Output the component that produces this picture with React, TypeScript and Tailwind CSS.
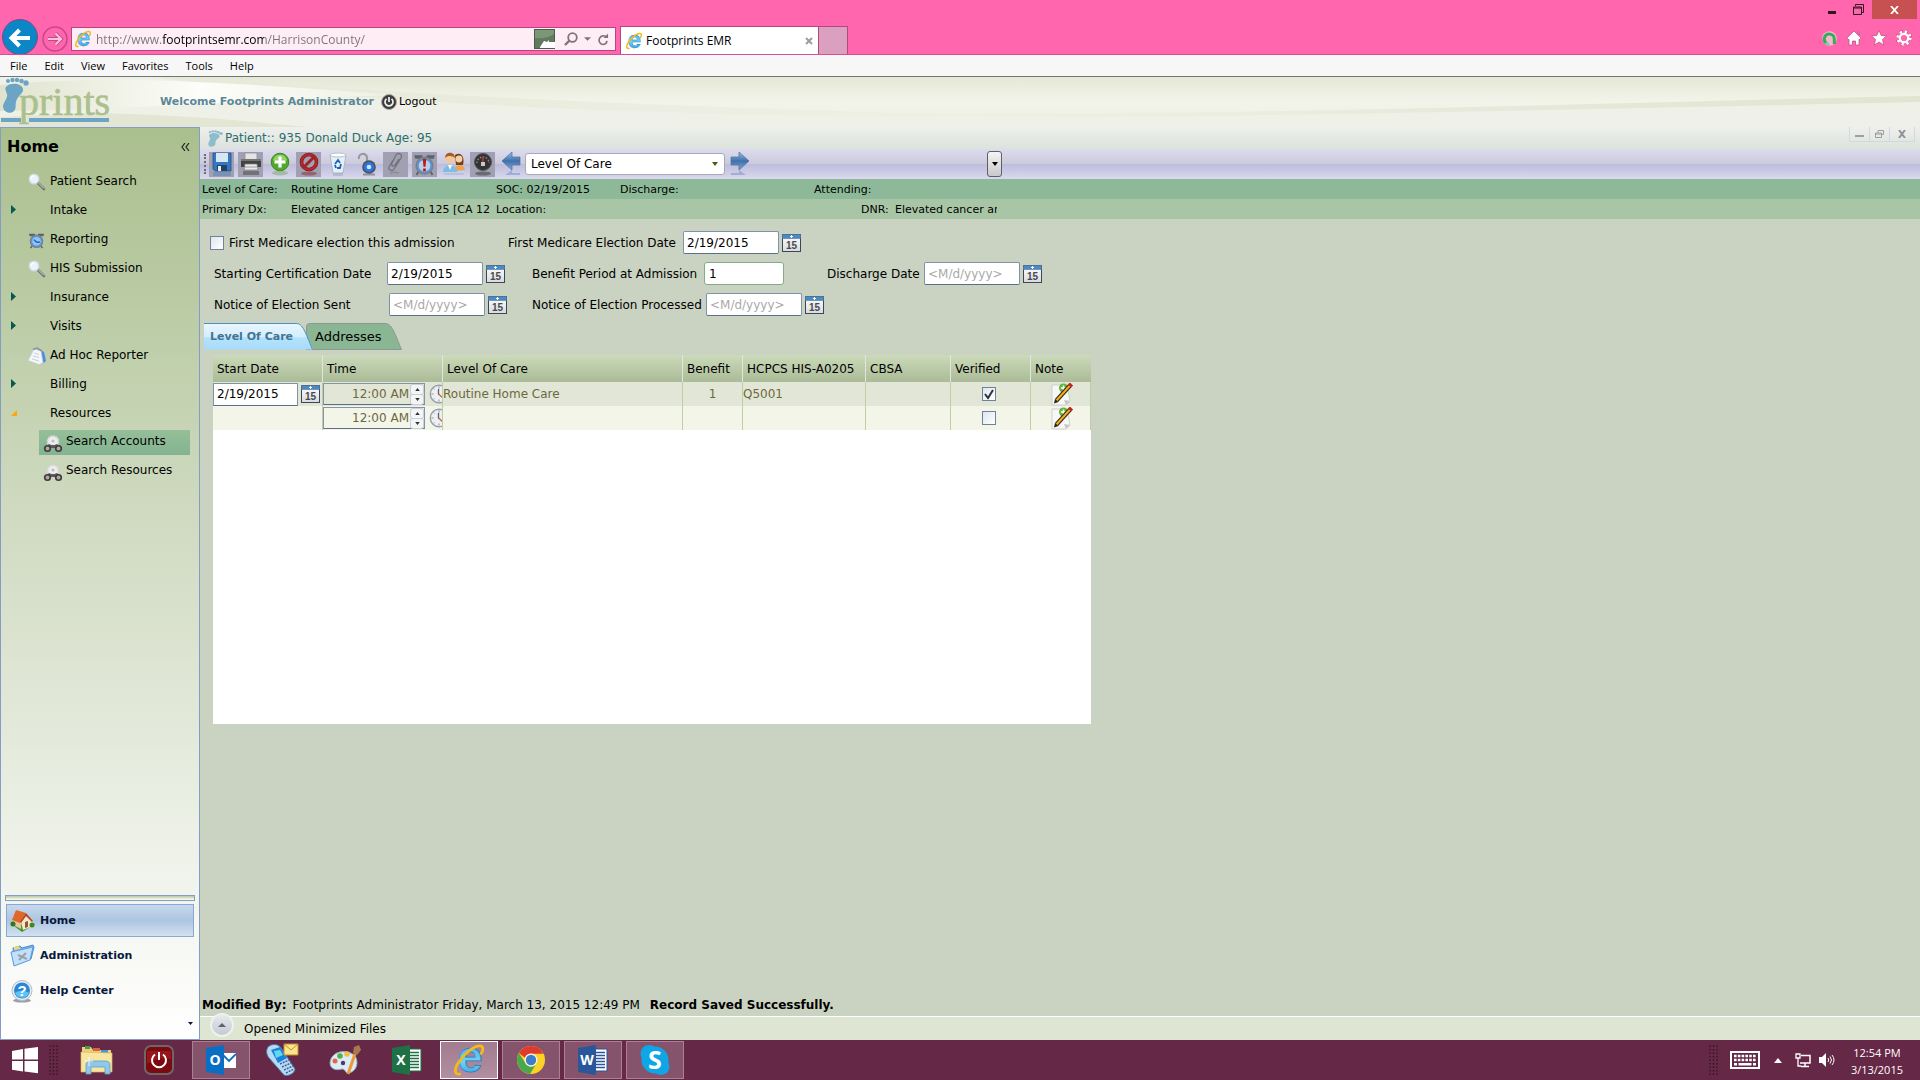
import type { ReactNode } from "react";

/* ───────────── Browser icons ───────────── */

function IeLogo({ size }: { size: number }) {
  return (
    <svg width={size} height={size} viewBox="0 0 32 32" className="overflow-visible" aria-hidden="true">
      <defs>
        <linearGradient id="ieBlue" x1="0" y1="0" x2="0" y2="1">
          <stop offset="0" stopColor="#2f95d8" />
          <stop offset="0.6" stopColor="#6fd2f8" />
          <stop offset="1" stopColor="#1e86cf" />
        </linearGradient>
      </defs>
      <text
        x="17"
        y="29"
        textAnchor="middle"
        fontSize="48"
        fontWeight="700"
        fontFamily="Liberation Sans, sans-serif"
        fill="url(#ieBlue)"
        stroke="#1b7fc4"
        strokeWidth="0.8"
      >
        e
      </text>
      <path
        d="M6 31C0 32 0 25 6 17C12 8 23 0 28 1C32 2 31 6 29 9"
        fill="none"
        stroke="#f5b91c"
        strokeWidth="3"
        strokeLinecap="round"
      />
    </svg>
  );
}

function WindowsLogo() {
  return (
    <svg width="28" height="28" viewBox="0 0 28 28" fill="#fff" aria-hidden="true">
      <path d="M1 5l11-2v10.500H1zM13.500 2.800L27 1v12.500H13.500zM1 15h11v10.500L1 23.800zM13.500 15H27v12.300l-13.500-1.800z" />
    </svg>
  );
}

/* ───────────── Application icons ───────────── */

function Footprint({ color }: { color: string }) {
  return (
    <svg width="17" height="17" viewBox="0 0 30 36" preserveAspectRatio="none" fill={color} aria-hidden="true">
      <path d="M7 9C13 4 23 7 24 13C24 17 18 19 17 24C16 29 18 31 14 34C9 38 3 34 4 29C5 24 8 21 7 17C6 14 4 11 7 9z" />
      <circle cx="7" cy="4.500" r="2.200" />
      <circle cx="12" cy="3" r="2.400" />
      <circle cx="17" cy="3" r="2.400" />
      <circle cx="21.500" cy="4.500" r="2.500" />
      <circle cx="26.500" cy="7.500" r="3.200" />
    </svg>
  );
}

function MagnifierIcon() {
  return (
    <svg width="18" height="18" viewBox="0 0 18 18" aria-hidden="true">
      <path d="M10 10l6 6" stroke="#6f7174" strokeWidth="2.600" strokeLinecap="round" />
      <path d="M10 9.500l6 6" stroke="#d9dadc" strokeWidth="1" />
      <circle cx="6" cy="6" r="4.800" fill="#e8f4fd" stroke="#d2dadf" strokeWidth="1.400" />
      <path d="M3 6a3 3 0 013-3" stroke="#fff" strokeWidth="1.500" fill="none" />
    </svg>
  );
}

function AlarmIcon({ size = 18, alert = false }: { size?: number; alert?: boolean }) {
  return (
    <svg width={size} height={size} viewBox="0 0 20 20" aria-hidden="true">
      <path d="M1 2h7l1 3H2zM19 2h-7l-1 3h7z" fill="#5d6266" />
      <path d="M5 16l-2 3M15 16l2 3" stroke="#666" strokeWidth="1.800" />
      <circle cx="10" cy="11" r="7.200" fill="#5b97e0" stroke="#77828c" strokeWidth="1.500" />
      <circle cx="10" cy="11" r="5" fill={alert ? "#bcd0e4" : "#8fc5fb"} />
      {alert ? (
        <path d="M8.500 5h3l-.6 7H9.100zM8.800 13.500h2.400v2.400H8.800z" fill="#c01818" />
      ) : (
        <path d="M7 9l3 3h4" stroke="#1d4f9c" strokeWidth="1.400" fill="none" />
      )}
    </svg>
  );
}

function ReportIcon() {
  return (
    <svg width="18" height="18" viewBox="0 0 18 18" aria-hidden="true">
      <path d="M11 2l5 3 2 9-4 3z" fill="#4e8cdd" />
      <path d="M6 2l7 2 2 12-4 1.500-11-4z" fill="#f4f7fa" stroke="#c5ced8" strokeWidth="0.800" />
      <path d="M5 2.500l4-1.500 5 3" stroke="#8694a5" strokeWidth="1.500" fill="none" />
      <path d="M6 6l5 1.500M5 9l6 1.500M4 12l7 2" stroke="#c3ccd5" strokeWidth="0.900" />
    </svg>
  );
}

function BinocularsIcon() {
  return (
    <svg width="20" height="18" viewBox="0 0 20 18" aria-hidden="true">
      <circle cx="10" cy="6.500" r="5.500" fill="#ededed" stroke="#d6d6d6" strokeWidth="1.800" strokeDasharray="2 0.800" />
      <circle cx="10" cy="6" r="1.500" fill="#bdbdbd" />
      <path d="M6 9l2.500 1h3L14 9l4 4H2z" fill="#5a5a5a" />
      <circle cx="4.500" cy="13.500" r="3.600" fill="#3d3d3d" />
      <circle cx="15.500" cy="13.500" r="3.600" fill="#3d3d3d" />
      <circle cx="4.500" cy="13.500" r="1.900" fill="#b5a5a5" />
      <circle cx="15.500" cy="13.500" r="1.900" fill="#b5a5a5" />
    </svg>
  );
}

function CalendarIcon() {
  return (
    <svg width="19" height="18" viewBox="0 0 19 18" aria-hidden="true">
      <defs>
        <linearGradient id="calPaper" x1="0" y1="0" x2="0" y2="1">
          <stop offset="0" stopColor="#ffffff" />
          <stop offset="1" stopColor="#d6dbe2" />
        </linearGradient>
      </defs>
      <rect x="0.500" y="0.500" width="18" height="17" fill="url(#calPaper)" stroke="#3f4650" />
      <rect x="0.500" y="0.500" width="18" height="4" fill="#4a8ac6" stroke="#5a7898" strokeWidth="0.600" />
      <path d="M9.500 1v3M8 2.500h3" stroke="#fff" />
      <text x="9.500" y="15" textAnchor="middle" fontSize="10" fontWeight="700" fontFamily="Liberation Sans, sans-serif" fill="#4a4a4a">
        15
      </text>
    </svg>
  );
}

function ClockIcon() {
  return (
    <svg width="13" height="20" viewBox="0 0 13 20" aria-hidden="true">
      <circle cx="10" cy="10" r="8.700" fill="#edf0f3" stroke="#98a0a8" strokeWidth="1.400" />
      <path d="M10 2.500v2M2.500 10h2M10 15.500v2M4.500 4.500l1 1M4.500 15.500l1-1" stroke="#89919a" />
      <path d="M9.500 5v5.500" stroke="#56616c" strokeWidth="1.300" />
      <path d="M9.500 10l4 3.500" stroke="#c0603c" strokeWidth="1.300" />
    </svg>
  );
}

function NoteIcon() {
  return (
    <svg width="22" height="23" viewBox="0 0 22 23" aria-hidden="true">
      <path d="M1 2h15l3 16-4 4H1z" fill="#f7f7f7" stroke="#c8c8c8" strokeWidth="0.800" />
      <path d="M19 18l-6-1 2 5z" fill="#c6c6c6" />
      <circle cx="12.500" cy="5" r="4.500" fill="#62b53f" />
      <path d="M12.500 2.500v5M10 5h5" stroke="#fff" strokeWidth="1.500" />
      <path d="M5.500 17.500L19 2.500" stroke="#33290f" strokeWidth="4.200" />
      <path d="M5.500 17.500L19 2.500" stroke="#f2ae22" strokeWidth="2" />
      <path d="M18.500 3l2-2" stroke="#cb2020" strokeWidth="4.500" />
      <path d="M3 20.500l1-4.500 3.500 3z" fill="#2e2613" />
    </svg>
  );
}

function ArrowIcon({ flip = false }: { flip?: boolean }) {
  return (
    <svg width="20" height="26" viewBox="0 0 20 26" aria-hidden="true" className={flip ? "-scale-x-100" : ""}>
      <defs>
        <linearGradient id="arrowBlue" x1="0" y1="0" x2="0" y2="1">
          <stop offset="0" stopColor="#9cc3e8" />
          <stop offset="0.500" stopColor="#3f70aa" />
          <stop offset="1" stopColor="#83abd6" />
        </linearGradient>
      </defs>
      <path d="M1 10L11 1v5h8v8h-8v5z" fill="url(#arrowBlue)" stroke="#476d9d" strokeWidth="0.700" />
      <path d="M11 19l-7 5h15v-2h-8z" fill="#7f9ac9" opacity="0.600" />
    </svg>
  );
}

/* ───────────── Toolbar drawings ───────────── */

const toolbarButtons: { label: string; shaded: boolean; icon: ReactNode }[] = [
  {
    label: "Save",
    shaded: true,
    icon: (
      <svg width="20" height="24" viewBox="0 0 20 24">
        <path d="M1 1h18v18H3l-2-2z" fill="#3477c2" stroke="#235287" strokeWidth="0.800" />
        <path d="M4 1h12v9H4z" fill="#d7e6f4" />
        <path d="M5 13h10v6H5z" fill="#25435f" />
        <path d="M6 14h3v5H6z" fill="#e7edf2" />
        <path d="M1 20h18v4H1z" fill="#3477c2" opacity="0.350" />
      </svg>
    ),
  },
  {
    label: "Print",
    shaded: true,
    icon: (
      <svg width="22" height="24" viewBox="0 0 22 24">
        <path d="M5 1h12v7H5z" fill="#e4e4e4" stroke="#888" strokeWidth="0.700" />
        <path d="M1 7h20v8H1z" fill="#444" />
        <path d="M1 7h20v2H1z" fill="#747474" />
        <path d="M5 12h12l1 6H4z" fill="#ececec" stroke="#777" strokeWidth="0.700" />
        <path d="M5 15h12" stroke="#999" />
        <path d="M3 19h16v4H3z" fill="#444" opacity="0.500" />
      </svg>
    ),
  },
  {
    label: "Add",
    shaded: false,
    icon: (
      <svg width="20" height="24" viewBox="0 0 20 24">
        <ellipse cx="10" cy="21" rx="8" ry="2.500" fill="#7fa372" opacity="0.500" />
        <circle cx="10" cy="10" r="8.800" fill="#51a82c" stroke="#3f8a20" />
        <path d="M3 8a7.300 7.300 0 0114 0c-4 2-10 2-14 0z" fill="#93d16c" />
        <path d="M10 4.500v11M4.500 10h11" stroke="#fff" strokeWidth="3.200" />
      </svg>
    ),
  },
  {
    label: "Cancel",
    shaded: true,
    icon: (
      <svg width="20" height="24" viewBox="0 0 20 24">
        <ellipse cx="10" cy="21.500" rx="8" ry="2" fill="#8a2430" opacity="0.500" />
        <circle cx="10" cy="10" r="7.500" fill="none" stroke="#7c161a" strokeWidth="3.600" />
        <circle cx="10" cy="10" r="7.500" fill="none" stroke="#b3282c" strokeWidth="2.400" />
        <path d="M4.500 15.500l11-11" stroke="#a02126" strokeWidth="3" />
      </svg>
    ),
  },
  {
    label: "Recycle",
    shaded: false,
    icon: (
      <svg width="18" height="24" viewBox="0 0 18 24">
        <path d="M1 3h16l-3 18H4z" fill="#e6eef6" stroke="#aab9c9" />
        <ellipse cx="9" cy="3" rx="8" ry="2" fill="#fff" stroke="#b4c0cc" />
        <path d="M6 12l3-4 2 3M12 12l-1 4H8M6 13l1 3" stroke="#1d62b8" strokeWidth="1.800" fill="none" />
        <path d="M4 21h10v3H4z" fill="#9aa7b8" opacity="0.500" />
      </svg>
    ),
  },
  {
    label: "Unlock",
    shaded: false,
    icon: (
      <svg width="20" height="24" viewBox="0 0 20 24">
        <path d="M2 7a4 4 0 018-2v5" fill="none" stroke="#9a9a9a" strokeWidth="2.200" />
        <circle cx="12" cy="15" r="6.800" fill="#4a4f57" />
        <circle cx="12" cy="15" r="5.300" fill="#2d75d8" />
        <circle cx="12" cy="15" r="2.300" fill="#cfe5fb" />
        <path d="M6 22.500h12" stroke="#555" strokeWidth="2" opacity="0.500" />
      </svg>
    ),
  },
  {
    label: "Attach",
    shaded: true,
    icon: (
      <svg width="20" height="24" viewBox="0 0 20 24">
        <path
          d="M7 8L3 15c-1 3 3 5 5 2l7-11c2-4-3-6-5-3L6 11c-1 3 1 4 3 2l4-6"
          fill="none"
          stroke="#73737c"
          strokeWidth="1.300"
        />
        <path d="M4 21c3-1 6-1 9 0" stroke="#777" strokeWidth="1.600" opacity="0.500" fill="none" />
      </svg>
    ),
  },
  { label: "Alarm", shaded: true, icon: <AlarmIcon size={23} alert /> },
  {
    label: "Contacts",
    shaded: false,
    icon: (
      <svg width="24" height="24" viewBox="0 0 24 24">
        <path d="M12 19c0-7 10-8 11-1z" fill="#eda24c" />
        <path d="M13 3c6-4 10 2 8 10h-7z" fill="#7a3d17" />
        <circle cx="17" cy="7" r="3.400" fill="#f7cfa4" />
        <path d="M1 20c0-9 14-9 14 0z" fill="#7ebce4" />
        <path d="M6 13h4l-2 5z" fill="#fff" />
        <circle cx="8" cy="6.500" r="4.500" fill="#f4c797" />
        <path d="M3 6c0-7 10-7 10 0-2-2-7-3-10 0z" fill="#a35f22" />
        <path d="M2 21h20v2H2z" fill="#92b9da" opacity="0.500" />
      </svg>
    ),
  },
  {
    label: "Dashboard",
    shaded: true,
    icon: (
      <svg width="20" height="24" viewBox="0 0 20 24">
        <circle cx="10" cy="10" r="8.500" fill="#333" stroke="#555" />
        <path d="M4 11a6 6 0 0112 0" stroke="#8b8b8b" strokeWidth="1.500" strokeDasharray="1.500 1.500" fill="none" />
        <path d="M10 10V5" stroke="#c33" strokeWidth="1.500" />
        <path d="M8 10h4v4H8z" fill="#c8c8c8" />
        <ellipse cx="10" cy="21.500" rx="8" ry="2" fill="#333" opacity="0.500" />
      </svg>
    ),
  },
];

/* ───────────── Form parts ───────────── */

function DateField({ id, value = "", label, labelWidth }: { id: string; value?: string; label: string; labelWidth: string }) {
  return (
    <div className="flex items-center">
      <label htmlFor={id} className={`shrink-0 whitespace-nowrap ${labelWidth}`}>
        {label}
      </label>
      <input
        id={id}
        defaultValue={value}
        placeholder="<M/d/yyyy>"
        className="h-[23px] w-24 rounded-xs border border-[#7f93aa] border-b-[#5d6f86] bg-white px-[3px] placeholder:text-[#a9a9a9]"
      />
      <button type="button" aria-label={`Open calendar for ${label}`} className="ml-[3px]">
        <CalendarIcon />
      </button>
    </div>
  );
}

function CheckBox({ id, label, checked = false }: { id: string; label?: string; checked?: boolean }) {
  return (
    <span className="relative inline-block h-[14px] w-[14px]">
      <input
        id={id}
        type="checkbox"
        defaultChecked={checked}
        aria-label={label}
        className="peer block h-[14px] w-[14px] appearance-none border border-[#6f8299] bg-linear-to-br from-[#dfe6ee] to-white"
      />
      <svg
        viewBox="0 0 14 14"
        className="pointer-events-none absolute inset-0 hidden peer-checked:block"
        aria-hidden="true"
      >
        <path d="M3 7l3 4 5-8" fill="none" stroke="#2c3338" strokeWidth="2" />
      </svg>
    </span>
  );
}

function TimeField({ label }: { label: string }) {
  return (
    <div className="flex h-6 items-center overflow-hidden">
      <div className="flex h-[22px] w-[102px] shrink-0 items-center border border-[#8494a6] border-b-[#5d6f86] pr-px">
        <input aria-label={label} defaultValue="12:00 AM" className="w-0 min-w-0 flex-1 text-right" />
        <span className="ml-[2px] flex w-3 flex-col gap-px">
          <button
            type="button"
            aria-label="Later"
            className="flex h-[9px] items-center justify-center rounded-xs bg-[#f4f5f7] ring-1 ring-[#cbd0d6]"
          >
            <svg width="5" height="3" viewBox="0 0 6 4"><path d="M0 4l3-4 3 4z" fill="#333" /></svg>
          </button>
          <button
            type="button"
            aria-label="Earlier"
            className="flex h-[9px] items-center justify-center rounded-xs bg-[#f4f5f7] ring-1 ring-[#cbd0d6]"
          >
            <svg width="5" height="3" viewBox="0 0 6 4"><path d="M0 0l3 4 3-4z" fill="#333" /></svg>
          </button>
        </span>
      </div>
      <button type="button" aria-label="Pick time" className="ml-1 shrink-0">
        <ClockIcon />
      </button>
    </div>
  );
}

/* ───────────── Browser chrome ───────────── */

function BrowserChrome() {
  return (
    <header className="shrink-0 font-['Open_Sans','Noto_Sans',sans-serif]">
      <div className="flex h-[55px] items-end border-b border-[#d64f8f] bg-[#ff66ad]">
        <div className="flex h-full items-end">
          <button type="button" aria-label="Back" className="ml-[2px] h-[35px] w-9 overflow-hidden">
            <svg width="36" height="36" viewBox="0 0 36 36">
              <circle cx="18" cy="18" r="17.500" fill="#0b86c6" stroke="#7d4a86" />
              <path d="M28 19H10M17.500 11L9.500 19l8 8" fill="none" stroke="#fff" strokeWidth="4" />
            </svg>
          </button>
          <button type="button" aria-label="Forward" className="mb-[2px] ml-1 h-[26px] w-[26px]">
            <svg width="26" height="26" viewBox="0 0 26 26">
              <circle cx="13" cy="13" r="12" fill="none" stroke="#c4478a" strokeWidth="1.500" />
              <path d="M6 13h13M13.500 7.500L19 13l-5.500 5.500" fill="none" stroke="#c4478a" strokeWidth="4" />
              <path d="M6 13h12M13.500 7.500L19 13l-5.500 5.500" fill="none" stroke="#ffc1de" strokeWidth="2.200" />
            </svg>
          </button>
        </div>
        <div className="mb-[3px] ml-[3px] flex h-6 w-[545px] items-center border border-[#b34880] bg-[#ffedf6] pr-1.5 pl-[3px]">
          <IeLogo size={16} />
          {/* host name is darker than the rest of the address */}
          <input
            aria-label="Address"
            defaultValue="http://www.footprintsemr.com/HarrisonCounty/"
            className="mt-px ml-[5px] h-[22px] min-w-0 flex-1 bg-[linear-gradient(90deg,#7b7379_66px,#000_66px,#000_168px,#7b7379_168px)] bg-clip-text text-[12px] text-transparent caret-black"
          />
          <svg width="21" height="20" viewBox="0 0 21 20" className="mr-[9px]" aria-hidden="true">
            <rect x="0.500" y="0.500" width="20" height="19" fill="#5f7a5d" stroke="#4b5d4b" />
            <path d="M1 1h19v4C14 9 8 10 1 9z" fill="#7c9678" />
            <path d="M6 18l4-6 3 1 2-2v2h6v6H6z" fill="#fff" />
          </svg>
          <button type="button" aria-label="Search">
            <svg width="14" height="14" viewBox="0 0 14 14">
              <circle cx="8.500" cy="5.500" r="4.300" fill="none" stroke="#81717b" strokeWidth="1.800" />
              <path d="M5.500 8.500L1 13" stroke="#81717b" strokeWidth="2.400" />
            </svg>
          </button>
          <button type="button" aria-label="Address options" className="mx-1.5">
            <svg width="7" height="4" viewBox="0 0 8 4"><path d="M0 0h8L4 4z" fill="#81717b" /></svg>
          </button>
          <button type="button" aria-label="Refresh">
            <svg width="12" height="14" viewBox="0 0 13 14">
              <path d="M10.500 5A4.800 4.800 0 106 13a4.800 4.800 0 004.800-4" fill="none" stroke="#81717b" strokeWidth="1.800" />
              <path d="M7 6h5V1z" fill="#81717b" />
            </svg>
          </button>
        </div>
        <div className="ml-1 flex h-7 w-[199px] items-center border border-b-0 border-[#b34880] bg-white px-[5px]">
          <IeLogo size={16} />
          <span className="mt-px ml-1 flex-1 text-[12px]">Footprints EMR</span>
          <button type="button" aria-label="Close tab">
            <svg width="8" height="8" viewBox="0 0 8 8"><path d="M1 1l6 6M7 1L1 7" stroke="#9d9d9d" strokeWidth="2" /></svg>
          </button>
        </div>
        <button type="button" aria-label="New tab" className="h-7 w-[29px] border border-b-0 border-l-0 border-[#b34880] bg-[#dba0c0]" />
        <div className="ml-auto flex h-full flex-col items-end">
          <div className="flex h-[19px] items-center">
            <button type="button" aria-label="Minimize" className="flex h-full w-6 items-center justify-center">
              <svg width="8" height="10" viewBox="0 0 8 10"><path d="M0 6h8v3H0z" fill="#2d1721" /></svg>
            </button>
            <button type="button" aria-label="Restore" className="flex h-full w-7 items-center justify-center">
              <svg width="11" height="11" viewBox="0 0 11 11" fill="none" stroke="#2d1721">
                <path d="M2.500 2V.5h8v8H9" />
                <path d="M.5 3h8v7.500h-8zM.5 4h8" />
              </svg>
            </button>
            <button type="button" aria-label="Close" className="mr-[3px] flex h-full w-[45px] items-center justify-center bg-[#c75050]">
              <svg width="9" height="8" viewBox="0 0 9 8"><path d="M1 0l7 8M8 0L1 8" stroke="#fff" strokeWidth="1.800" /></svg>
            </button>
          </div>
          <div className="mt-[11px] mr-2 flex items-center gap-[9px]">
            <svg width="15" height="15" viewBox="0 0 15 15" aria-label="Avast">
              <circle cx="7.500" cy="7.500" r="7.300" fill="#f3b9d3" />
              <path d="M5 12.500A5 5 0 1112.300 8v5" fill="none" stroke="#35ad55" strokeWidth="3" />
              <path d="M4 11.500a3 3 0 003.500 1.500" fill="none" stroke="#7fd09a" strokeWidth="2.500" />
            </svg>
            <svg width="16" height="16" viewBox="0 0 16 16" aria-label="Home page">
              <path d="M8 1l7 7-1 1.500h-1V15H9.500v-4h-3v4H3V9.500H2L1 8zM11.500 2H13v3z" fill="#fff" stroke="#b34b83" strokeWidth="0.700" />
            </svg>
            <svg width="16" height="16" viewBox="0 0 16 16" aria-label="Favorites">
              <path d="M8 .5l2.200 5 5.300.4-4 3.500 1.200 5.600L8 12l-4.700 3 1.200-5.600-4-3.500 5.300-.4z" fill="#fff" stroke="#b34b83" strokeWidth="0.700" />
            </svg>
            <svg width="16" height="16" viewBox="0 0 16 16" aria-label="Tools">
              <circle cx="8" cy="8" r="6.200" fill="none" stroke="#a94a7c" strokeWidth="4" strokeDasharray="2.600 2.270" />
              <circle cx="8" cy="8" r="6.200" fill="none" stroke="#fff" strokeWidth="3" strokeDasharray="2.200 2.670" />
              <circle cx="8" cy="8" r="4.200" fill="none" stroke="#fff" strokeWidth="2.200" />
            </svg>
          </div>
        </div>
      </div>
      <nav className="flex h-[22px] items-center gap-[17px] border-b border-[#6f7770] bg-[#f7f7f7] pl-2.5 text-[11px] text-black">
        {["File", "Edit", "View", "Favorites", "Tools", "Help"].map((item) => (
          <button key={item} type="button">{item}</button>
        ))}
      </nav>
    </header>
  );
}

/* ───────────── Banner ───────────── */

function Banner() {
  return (
    <div className="relative flex h-[50px] shrink-0 items-center overflow-hidden bg-[#eef0e2]">
      <svg
        className="absolute inset-0 h-full w-full"
        viewBox="0 0 1920 50"
        preserveAspectRatio="none"
        aria-hidden="true"
      >
        <defs>
          <linearGradient id="bannerFade" x1="0" y1="0" x2="0" y2="1">
            <stop offset="0" stopColor="#e5e8d6" />
            <stop offset="0.500" stopColor="#f2f4ea" />
            <stop offset="1" stopColor="#eeefe4" />
          </linearGradient>
          <linearGradient id="bannerGlow" x1="0" y1="0" x2="1" y2="0">
            <stop offset="0" stopColor="#dfe3cd" />
            <stop offset="0.500" stopColor="#fdfdf9" />
            <stop offset="1" stopColor="#eef0e5" />
          </linearGradient>
          <linearGradient id="bannerSweep" x1="0" y1="0" x2="1" y2="0">
            <stop offset="0" stopColor="#e4e8d5" />
            <stop offset="0.500" stopColor="#eef0e5" />
            <stop offset="1" stopColor="#e0e4d0" />
          </linearGradient>
        </defs>
        <rect width="1920" height="50" fill="url(#bannerFade)" />
        <path d="M0 0H190C330 12 560 26 900 36C1200 40 1600 26 1920 19V50H0z" fill="url(#bannerSweep)" />
        <path d="M0 0H150C330 22 560 36 900 40C1200 42 1600 32 1920 25V50H0z" fill="#eff1e8" />
        <path d="M0 8C120 -4 260 8 400 18C300 20 160 32 0 34z" fill="url(#bannerGlow)" />
        <path d="M90 36C200 38 260 46 310 50H0V40z" fill="#e2e6d3" />
      </svg>
      <svg width="110" height="50" viewBox="0 0 110 50" className="relative" role="img" aria-label="Footprints">
        <text x="19" y="38" fontSize="40" fontFamily="Liberation Serif, serif" fill="#abc08d" stroke="#abc08d" strokeWidth="0.600">
          prints
        </text>
        <g fill="#6ba4c4">
          <path d="M7 9C12 5 22 7 23 12C24 16 17 19 16 25C15 29 17 32 13 35C9 37 3 35 3 29C4 24 8 21 7 17C6 14 4 11 7 9z" />
          <circle cx="8" cy="4" r="2" />
          <circle cx="12.500" cy="3" r="2.200" />
          <circle cx="17" cy="3" r="2.200" />
          <circle cx="21.500" cy="4" r="2.300" />
          <circle cx="26" cy="6" r="2.700" />
          <path d="M1 41h20v4H1zM29 41h80v4H29z" />
        </g>
      </svg>
      <span className="relative ml-[50px] text-[11px] font-bold text-[#5b8797]">Welcome Footprints Administrator</span>
      <button type="button" className="relative ml-[7px] flex items-center gap-[2px] text-[11px]">
        <svg width="16" height="16" viewBox="0 0 16 16" aria-hidden="true">
          <circle cx="8" cy="8" r="7.500" fill="#3c3c3c" stroke="#a8a8a8" />
          <path d="M5.500 4.800a4 4 0 105 0M8 3v5" fill="none" stroke="#f3f3f3" strokeWidth="1.700" />
        </svg>
        Logout
      </button>
    </div>
  );
}

/* ───────────── Sidebar ───────────── */

const menuItems: { label: string; icon?: ReactNode; expandable?: boolean; open?: boolean }[] = [
  { label: "Patient Search", icon: <MagnifierIcon /> },
  { label: "Intake", expandable: true },
  { label: "Reporting", icon: <AlarmIcon size={17} /> },
  { label: "HIS Submission", icon: <MagnifierIcon /> },
  { label: "Insurance", expandable: true },
  { label: "Visits", expandable: true },
  { label: "Ad Hoc Reporter", icon: <ReportIcon /> },
  { label: "Billing", expandable: true },
  { label: "Resources", expandable: true, open: true },
];

const sections: { label: string; active?: boolean; icon: ReactNode }[] = [
  {
    label: "Home",
    active: true,
    icon: (
      <svg width="26" height="24" viewBox="0 0 26 24" aria-hidden="true">
        <path d="M0 14l10-4 15 5-13 8z" fill="#4c9428" />
        <path d="M3 9l8 3v8l-8-4z" fill="#e2c7a0" />
        <path d="M11 13l6-6 6 5v5l-10 4z" fill="#f6e6cb" />
        <path d="M6 1l10 3-6 10-8-3z" fill="#e0662c" />
        <path d="M16 4l7 8-1 1-6-6-5 7-1-1z" fill="#b8441a" />
        <path d="M15 13l3-1v6l-3 1z" fill="#8a5a38" />
        <circle cx="3" cy="15" r="2.500" fill="#2f7a18" />
        <circle cx="22" cy="16" r="2.500" fill="#3f8a1f" />
      </svg>
    ),
  },
  {
    label: "Administration",
    icon: (
      <svg width="26" height="24" viewBox="0 0 26 24" aria-hidden="true">
        <path d="M3 4l7-2 2 2 11-3 1 2-3 12-17 6z" fill="#7db7ef" stroke="#4b8ad6" />
        <path d="M4 3l5-1 1 3-6 1z" fill="#f1d968" />
        <path d="M1 8l22-5-3 13L4 22z" fill="#c3e0fb" stroke="#5c9be0" />
        <path d="M9 16l7-7M8 11l9 4" stroke="#99a3ad" strokeWidth="2.200" />
      </svg>
    ),
  },
  {
    label: "Help Center",
    icon: (
      <svg width="24" height="24" viewBox="0 0 24 24" aria-hidden="true">
        <ellipse cx="12" cy="21.500" rx="9" ry="2" fill="#9aa0a5" />
        <circle cx="12" cy="11.500" r="10" fill="#e9eef2" stroke="#b4bcc4" />
        <circle cx="12" cy="11.500" r="8" fill="#2a87d8" />
        <path d="M5 14a7.500 7.500 0 0014 0c-4-3-10-3-14 0z" fill="#5cc4f4" />
        <text x="12" y="17" textAnchor="middle" fontSize="15" fontWeight="700" fontFamily="Liberation Sans, sans-serif" fill="#fff">
          ?
        </text>
      </svg>
    ),
  },
];

function Sidebar() {
  return (
    <aside className="flex w-[200px] shrink-0 flex-col border border-[#839dc4] bg-linear-to-b from-[#aabf8e] via-[#d6dfc9] to-white">
      <div className="flex h-[37px] items-center justify-between pr-[9px] pl-1.5">
        <h1 className="text-base font-bold">Home</h1>
        <button type="button" aria-label="Collapse menu">
          <svg width="9" height="8" viewBox="0 0 9 8" fill="none" stroke="#222" strokeWidth="1.200">
            <path d="M4 0L1 4l3 4M8 0L5 4l3 4" />
          </svg>
        </button>
      </div>
      <ul className="pt-px">
        {menuItems.map((item) => (
          <li key={item.label}>
            <button type="button" className="flex h-[29px] w-full items-center text-left">
              <span className="flex w-[27px] shrink-0 justify-start pl-2.5">
                {item.expandable && !item.open && (
                  <svg width="5" height="9" viewBox="0 0 5 9"><path d="M0 0l5 4.500L0 9z" fill="#055a4b" /></svg>
                )}
                {item.open && (
                  <svg width="6" height="6" viewBox="0 0 6 6"><path d="M6 0v6H0z" fill="#fca80c" /></svg>
                )}
              </span>
              <span className="w-[22px] shrink-0 pt-[3px]">{item.icon}</span>
              {item.label}
            </button>
          </li>
        ))}
        <li>
          <ul className="mt-[3px] mr-[9px] ml-[38px] flex flex-col gap-1">
            <li>
              <button
                type="button"
                className="flex h-[25px] w-full items-center gap-[3px] bg-linear-to-b from-[#95bf98] to-[#83b392] pb-[3px] pl-1 text-left"
              >
                <span className="pt-1.5"><BinocularsIcon /></span>
                Search Accounts
              </button>
            </li>
            <li>
              <button type="button" className="flex h-[25px] w-full items-center gap-[3px] pb-[3px] pl-1 text-left">
                <span className="pt-1.5"><BinocularsIcon /></span>
                Search Resources
              </button>
            </li>
          </ul>
        </li>
      </ul>
      <div className="mx-1 mt-auto h-1.5 border border-[#839dc4] bg-linear-to-b from-[#b7c8a0] to-white" />
      <div className="mx-[5px] mt-[3px] flex flex-col gap-[2px]">
        {sections.map((section) => (
          <button
            key={section.label}
            type="button"
            className={`flex h-[33px] items-center pl-[3px] text-left text-[11px] font-bold text-[#06183a] ${
              section.active
                ? "border border-[#8aa9d2] bg-linear-to-b from-[#c6d9ee] via-[#adc5e1] to-[#d3e1f0]"
                : "border border-transparent"
            }`}
          >
            <span className="flex w-[30px] shrink-0">{section.icon}</span>
            {section.label}
          </button>
        ))}
      </div>
      <div className="flex h-8 items-center justify-end pr-1.5">
        <svg width="5" height="3" viewBox="0 0 5 3"><path d="M0 0h5L2.500 3z" fill="#06183a" /></svg>
      </div>
    </aside>
  );
}

/* ───────────── Patient window ───────────── */

function PatientWindow() {
  return (
    <main className="flex min-w-0 flex-1 flex-col bg-[#cad2c1]">
      <div className="flex h-[22px] shrink-0 items-start justify-between bg-linear-to-b from-[#eef0ec] to-[#dce2dd]">
        <h2 className="flex items-center gap-[2px] pt-[3px] pl-1.5 leading-[15px] text-[#2d6d6a]">
          <Footprint color="#8fbccb" />
          Patient:: 935 Donald Duck Age: 95
        </h2>
        <div className="mr-[5px] flex h-[15px] divide-x divide-[#cfd9e2] border border-t-0 border-[#cfd9e2]">
          <button type="button" aria-label="Minimize patient" className="flex w-5 items-center justify-center">
            <svg width="9" height="8" viewBox="0 0 9 8"><path d="M0 5h9v2H0z" fill="#9b9fa1" /></svg>
          </button>
          <button type="button" aria-label="Restore patient" className="flex w-5 items-center justify-center">
            <svg width="9" height="8" viewBox="0 0 9 8" fill="none" stroke="#9b9fa1">
              <path d="M3 2.500V.5h5.500v4H7M.5 3h6v4.500h-6zM.5 4h6" />
            </svg>
          </button>
          <button type="button" aria-label="Close patient" className="flex w-6 items-center justify-center">
            <svg width="8" height="8" viewBox="0 0 8 8"><path d="M1 0l6 8M7 0L1 8" stroke="#8f9294" strokeWidth="2" /></svg>
          </button>
        </div>
      </div>

      {/* ── Toolbar ── */}
      <div className="flex h-[30px] shrink-0 items-center bg-[linear-gradient(180deg,#dddcee_0%,#cccbdc_49%,#bdbcdc_51%,#dad9ee_100%)]">
        <span className="mr-[3px] ml-1 h-5 border-l-2 border-dotted border-[#6c6c74]" />
        <div className="flex gap-1">
          {toolbarButtons.map((button) => (
            <button
              key={button.label}
              type="button"
              aria-label={button.label}
              className={`flex h-[25px] w-[25px] items-center justify-center ${button.shaded ? "bg-[#a1a0b2]" : ""}`}
            >
              {button.icon}
            </button>
          ))}
        </div>
        <button type="button" aria-label="Previous page" className="ml-[6px]"><ArrowIcon /></button>
        <div className="relative ml-1">
          <select
            aria-label="Page"
            className="h-[22px] w-[200px] appearance-none rounded-[3px] border border-[#a7a9b8] bg-white pl-[5px]"
          >
            <option>Level Of Care</option>
          </select>
          <svg width="6" height="4" viewBox="0 0 6 4" className="pointer-events-none absolute top-[9px] right-[7px]">
            <path d="M0 0h6L3 4z" fill="#3f6212" />
          </svg>
        </div>
        <button type="button" aria-label="Next page" className="ml-[5px]"><ArrowIcon flip /></button>
        <button
          type="button"
          aria-label="More tools"
          className="ml-[237px] flex h-[26px] w-[15px] items-center justify-center rounded-[3px] border border-[#5f5f66] bg-linear-to-b from-[#f4f4f4] to-[#c9c9cc]"
        >
          <svg width="6" height="4" viewBox="0 0 6 4"><path d="M0 0h6L3 4z" fill="#000" /></svg>
        </button>
      </div>

      {/* ── Patient summary ── */}
      <div className="flex h-5 shrink-0 items-center bg-[#8eb998] pt-[2px] pl-[2px] text-[11px] whitespace-nowrap">
        <span className="w-[89px]">Level of Care:</span>
        <span className="w-[205px]">Routine Home Care</span>
        <span className="w-[124px]">SOC: 02/19/2015</span>
        <span className="w-[194px]">Discharge:</span>
        <span>Attending:</span>
      </div>
      <div className="flex h-5 shrink-0 items-center bg-[#a8c6a6] pt-[2px] pl-[2px] text-[11px] whitespace-nowrap">
        <span className="w-[89px]">Primary Dx:</span>
        <span className="w-[205px]">Elevated cancer antigen 125 [CA 12</span>
        <span className="w-[365px]">Location:</span>
        <span className="w-[34px]">DNR:</span>
        <span className="w-[102px] overflow-hidden">Elevated cancer an</span>
      </div>

      {/* ── Election form ── */}
      <form className="flex flex-col gap-2 pt-3 pl-3.5">
        <div className="-ml-1 flex items-center">
          <div className="flex w-[298px] items-center gap-[5px]">
            <CheckBox id="first-election" />
            <label htmlFor="first-election">First Medicare election this admission</label>
          </div>
          <DateField id="first-election-date" label="First Medicare Election Date" labelWidth="w-[175px]" value="2/19/2015" />
        </div>
        <div className="flex items-center">
          <DateField id="cert-date" label="Starting Certification Date" labelWidth="w-[173px]" value="2/19/2015" />
          <label htmlFor="benefit-period" className="ml-[27px] w-[172px]">Benefit Period at Admission</label>
          <input
            id="benefit-period"
            defaultValue="1"
            className="mr-[43px] h-[23px] w-20 rounded-[3px] border border-[#86ab86] bg-white px-1"
          />
          <DateField id="discharge-date" label="Discharge Date" labelWidth="w-[97px]" />
        </div>
        <div className="flex items-center gap-[25px]">
          <DateField id="notice-sent" label="Notice of Election Sent" labelWidth="w-[175px]" />
          <DateField id="notice-processed" label="Notice of Election Processed" labelWidth="w-[174px]" />
        </div>
      </form>

      {/* ── Tabs ── */}
      <div role="tablist" className="mt-[7px] flex h-[27px] pl-1">
        <button type="button" role="tab" aria-selected="true" className="relative z-10 w-[109px] pt-px pl-1.5 text-left text-[11px] font-bold text-[#44748f]">
          <svg width="109" height="27" viewBox="0 0 109 27" className="absolute inset-0 -z-10" aria-hidden="true">
            <defs>
              <linearGradient id="tabBlue" x1="0" y1="0" x2="0" y2="1">
                <stop offset="0" stopColor="#e9f6fe" />
                <stop offset="0.500" stopColor="#d3eefd" />
                <stop offset="0.550" stopColor="#b4e2fc" />
                <stop offset="1" stopColor="#a6dcfb" />
              </linearGradient>
            </defs>
            <path d="M0 .5H92C99 .5 101 9 109 26.500H0z" fill="url(#tabBlue)" />
            <path d="M0 .5H92C99 .5 101 9 108.500 26.500" fill="none" stroke="#4f8fc0" />
          </svg>
          Level Of Care
        </button>
        <button type="button" role="tab" aria-selected="false" className="relative z-0 -ml-[7px] w-[96px] pt-px pl-[9px] text-left text-[13px]">
          <svg width="96" height="27" viewBox="0 0 96 27" className="absolute inset-0 -z-10" aria-hidden="true">
            <path d="M.5 26V3.500Q.5 .5 3.500 .5H79C86 .5 88 9 95.500 26.500H.5z" fill="#8ab693" stroke="#899b91" />
          </svg>
          Addresses
        </button>
      </div>

      {/* ── Level of care grid ── */}
      <div className="mt-[5px] ml-[13px] h-[369px] w-[878px] bg-white">
        <table className="w-full table-fixed border-separate border-spacing-0">
          <colgroup>
            <col className="w-[110px]" />
            <col className="w-[120px]" />
            <col className="w-[240px]" />
            <col className="w-[60px]" />
            <col className="w-[123px]" />
            <col className="w-[85px]" />
            <col className="w-[80px]" />
            <col className="w-[60px]" />
          </colgroup>
          <thead>
            <tr className="h-[27px] bg-linear-to-b from-[#cbdab8] to-[#abbb98] text-left">
              {["Start Date", "Time", "Level Of Care", "Benefit", "HCPCS HIS-A0205", "CBSA", "Verified", "Note"].map((title) => (
                <th key={title} className="border-r border-[#dfe5e0] pl-1 font-normal whitespace-nowrap last:border-r-0">
                  {title}
                </th>
              ))}
            </tr>
          </thead>
          <tbody className="text-[#6e6840]">
            <tr className="h-6 bg-[#e2e6d6] [&>td]:border-r [&>td]:border-[#bfcea6] [&>td]:p-0">
              <td>
                <div className="flex h-6 items-center gap-[3px]">
                  <input
                    aria-label="Start date"
                    defaultValue="2/19/2015"
                    className="h-[23px] w-[85px] border border-[#7f93aa] border-b-[#5d6f86] bg-white px-[3px] text-black"
                  />
                  <button type="button" aria-label="Open start date calendar"><CalendarIcon /></button>
                </div>
              </td>
              <td><TimeField label="Start time" /></td>
              <td>Routine Home Care</td>
              <td className="text-center">1</td>
              <td>Q5001</td>
              <td />
              <td>
                <div className="flex h-[18px] items-center pl-[31px]"><CheckBox id="verified-1" label="Verified" checked /></div>
              </td>
              <td>
                <button type="button" aria-label="Edit note" className="ml-5 block"><NoteIcon /></button>
              </td>
            </tr>
            <tr className="h-6 bg-[#f2f5e8] [&>td]:border-r [&>td]:border-[#bfcea6] [&>td]:p-0">
              <td />
              <td><TimeField label="New row time" /></td>
              <td />
              <td />
              <td />
              <td />
              <td>
                <div className="flex h-[18px] items-center pl-[31px]"><CheckBox id="verified-2" label="Verified" /></div>
              </td>
              <td>
                <button type="button" aria-label="Add note" className="ml-5 block"><NoteIcon /></button>
              </td>
            </tr>
          </tbody>
        </table>
      </div>

      {/* ── Status ── */}
      <div className="mt-auto flex h-6 shrink-0 items-center pt-px pl-[2px] whitespace-nowrap">
        <b>Modified By:</b>
        <span className="mr-2.5 ml-1.5">Footprints Administrator Friday, March 13, 2015 12:49 PM</span>
        <b>Record Saved Successfully.</b>
      </div>
      <div className="flex h-6 shrink-0 items-center border-t border-white bg-[#dee5d3] pl-2.5">
        <button
          type="button"
          aria-label="Show minimized files"
          className="-mt-2 flex h-6 w-6 items-center justify-center rounded-full border-2 border-[#eef1ee] bg-linear-to-b from-[#e6e9ed] to-[#c5cad2]"
        >
          <svg width="8" height="4" viewBox="0 0 8 4"><path d="M0 4l4-4 4 4z" fill="#5d646e" /></svg>
        </button>
        <span className="ml-2.5">Opened Minimized Files</span>
      </div>
    </main>
  );
}

/* ───────────── Taskbar ───────────── */

function OfficeLogo({ letter, color, page }: { letter: string; color: string; page: ReactNode }) {
  return (
    <svg width="30" height="32" viewBox="0 0 30 32" aria-hidden="true">
      {page}
      <path d="M0 4L18 1v30L0 28z" fill={color} />
      <text x="9" y="21" textAnchor="middle" fontSize="14" fontWeight="700" fontFamily="Open Sans, sans-serif" fill="#fff">
        {letter}
      </text>
    </svg>
  );
}

function linedPage(color: string) {
  return (
    <g>
      <path d="M16 5h13v22H16z" fill="#fff" stroke={color} />
      <path d="M18 8.500h9M18 11.500h9M18 14.500h9M18 17.500h9M18 20.500h9M18 23.500h9" stroke={color} strokeWidth="1.300" />
    </g>
  );
}

const tasks: { label: string; state: "idle" | "open" | "focused"; icon: ReactNode }[] = [
  {
    label: "File Explorer",
    state: "idle",
    icon: (
      <svg width="34" height="32" viewBox="0 0 34 32">
        <path d="M2 3h9l2 3h18v22H2z" fill="#eecf74" />
        <path d="M5 2h5v3H5z" fill="#41a04a" />
        <path d="M13 4h7v3h-7z" fill="#d9633b" />
        <path d="M21 6h7v3h-7z" fill="#3b9ada" />
        <path d="M1 8l31 1v19H1z" fill="#f8e5a2" stroke="#d8b85b" strokeWidth="0.700" />
        <path d="M6 30v-9c0-3 2-4 5-4h14c3 0 5 1 5 4v9h-5v-7H11v7z" fill="#8fc8e8" stroke="#5f9fc8" strokeWidth="0.800" />
        <path d="M9 13v9M5 17h8" stroke="#fff" opacity="0.800" />
      </svg>
    ),
  },
  {
    label: "Power",
    state: "idle",
    icon: (
      <svg width="30" height="30" viewBox="0 0 30 30">
        <rect x="1" y="1" width="28" height="28" rx="6" fill="#7a0a10" stroke="#6f6668" strokeWidth="2" />
        <path d="M3 6h24v8C18 12 10 14 3 19z" fill="#b22228" opacity="0.500" />
        <path d="M11 9.500a7 7 0 108 0M15 7v8" fill="none" stroke="#fff" strokeWidth="2" />
      </svg>
    ),
  },
  {
    label: "Outlook",
    state: "open",
    icon: (
      <OfficeLogo
        letter="O"
        color="#0a6fc2"
        page={
          <g>
            <path d="M15 9h15v15H15z" fill="#fff" />
            <path d="M16 10l7 7 7-7" fill="none" stroke="#0a6fc2" strokeWidth="1.800" />
          </g>
        }
      />
    ),
  },
  {
    label: "Phone messages",
    state: "idle",
    icon: (
      <svg width="34" height="34" viewBox="0 0 34 34">
        <path d="M2 4c4-4 11-3 13 1l14 21c0 4-7 8-11 6L3 15C0 11 0 7 2 4z" fill="#b9d8f4" stroke="#4878a8" />
        <path d="M5 7l9-3 7 11-9 5z" fill="#1684dc" />
        <path d="M8 8l6-1 3 5-7 3z" fill="#65d8ee" />
        <path d="M14 21l9-4M16 24l9-4M18 27l9-4M20 30l8-4" stroke="#3f659a" strokeWidth="1.500" strokeDasharray="2 1" />
        <path d="M18 1h14v11H18z" fill="#fbe48c" stroke="#be8f26" />
        <path d="M18 1l7 6 7-6" fill="none" stroke="#be8f26" />
      </svg>
    ),
  },
  {
    label: "Paint",
    state: "idle",
    icon: (
      <svg width="32" height="32" viewBox="0 0 32 32">
        <path d="M3 13C8 6 20 6 26 12c4 6 2 15-6 17-4 1-3-4-7-4C3 28-2 21 3 13z" fill="#dcebf5" stroke="#90abc0" />
        <circle cx="11" cy="12" r="2.800" fill="#57ad4b" />
        <circle cx="6" cy="17" r="2.500" fill="#e2664e" />
        <circle cx="18" cy="10" r="2.800" fill="#edc149" />
        <circle cx="14" cy="19" r="2.200" fill="#4a3b68" />
        <path d="M19 30l7-20" stroke="#e99a32" strokeWidth="3" />
        <path d="M24 9l1-6 5-2 2 5-4 5z" fill="#a9794c" />
      </svg>
    ),
  },
  { label: "Excel", state: "idle", icon: <OfficeLogo letter="X" color="#1e7145" page={linedPage("#1e7145")} /> },
  { label: "Internet Explorer", state: "focused", icon: <IeLogo size={30} /> },
  {
    label: "Chrome",
    state: "open",
    icon: (
      <svg width="30" height="30" viewBox="0 0 30 30">
        <circle cx="15" cy="15" r="14" fill="#fcd225" />
        <path d="M2.900 8A14 14 0 0127.500 8.700H15a6.500 6.500 0 00-6 4z" fill="#de3b2e" />
        <path d="M2.900 8A14 14 0 0014 29l5.500-9A6.500 6.500 0 019 17.500z" fill="#4aa84c" />
        <circle cx="15" cy="15" r="6.500" fill="#f4f4f4" />
        <circle cx="15" cy="15" r="5.200" fill="#3b7fc8" />
      </svg>
    ),
  },
  { label: "Word", state: "open", icon: <OfficeLogo letter="W" color="#2a579a" page={linedPage("#2a579a")} /> },
  {
    label: "Skype",
    state: "open",
    icon: (
      <svg width="32" height="32" viewBox="0 0 32 32">
        <g fill="#0fa6e8">
          <circle cx="16" cy="16" r="13.500" />
          <circle cx="10" cy="9.500" r="8.500" />
          <circle cx="22" cy="22.500" r="8.500" />
        </g>
        <text x="16" y="25" textAnchor="middle" fontSize="25" fontWeight="700" fontFamily="Open Sans, sans-serif" fill="#fff">
          S
        </text>
      </svg>
    ),
  },
];

const taskStyles = {
  idle: "border-transparent",
  open: "border-[#a98195] bg-[#85536b]",
  focused: "border-white bg-linear-to-b from-[#a27c90] to-[#b18ea0]",
};

function Grip() {
  return (
    <svg width="9" height="31" viewBox="0 0 9 31" aria-hidden="true">
      <path d="M1 .5v30M4.500 .5v30M8 .5v30" stroke="#34111f" strokeWidth="1.200" strokeDasharray="1.500 2" />
    </svg>
  );
}

function Taskbar() {
  return (
    <footer className="flex h-10 shrink-0 items-center bg-[#652846] font-['Open_Sans','Noto_Sans',sans-serif] text-white">
      <button type="button" aria-label="Start" className="mr-2.5 ml-[11px]"><WindowsLogo /></button>
      <Grip />
      <div className="ml-[10px] flex gap-1">
        {tasks.map((task) => (
          <button
            key={task.label}
            type="button"
            aria-label={task.label}
            className={`flex h-[38px] w-[58px] items-center justify-center border ${taskStyles[task.state]}`}
          >
            {task.icon}
          </button>
        ))}
      </div>
      <div className="ml-auto flex items-center pr-[17px]">
        <Grip />
        <svg width="30" height="18" viewBox="0 0 30 18" className="ml-3" aria-label="Keyboard">
          <rect x="1" y="1" width="28" height="16" fill="none" stroke="#fff" strokeWidth="2" />
          <path d="M4 5h22M4 9h22" stroke="#fff" strokeWidth="2.600" strokeDasharray="2.600 1.200" />
          <path d="M4 13.200h3M8.500 13.200h13M23 13.200h3" stroke="#fff" strokeWidth="2.400" />
        </svg>
        <svg width="8" height="5" viewBox="0 0 8 5" className="ml-[14px]"><path d="M0 5l4-5 4 5z" fill="#fff" /></svg>
        <svg width="16" height="15" viewBox="0 0 16 15" className="ml-[13px]" aria-label="Network" fill="none" stroke="#fff">
          <path d="M6 2.500h9v7.500H5M10 10v3M6 13.500h8" strokeWidth="1.500" />
          <path d="M1 1h4v4H1zM3 5v8h3" strokeWidth="1.300" />
        </svg>
        <svg width="16" height="14" viewBox="0 0 16 14" className="ml-2" aria-label="Volume" fill="none" stroke="#fff">
          <path d="M0 4h3l4-4v14L3 10H0z" fill="#fff" stroke="none" />
          <path d="M9 5q1.500 2 0 4M11 3.500q3 3.500 0 7M13 2q4 5 0 10" />
        </svg>
        <div className="ml-4 pt-px text-center text-[11px] leading-[17px]">
          <div>12:54 PM</div>
          <div>3/13/2015</div>
        </div>
      </div>
    </footer>
  );
}

export default function App() {
  return (
    <div className="flex h-screen flex-col overflow-hidden font-['DejaVu_Sans',Verdana,sans-serif] text-[12px] leading-4 text-black">
      <BrowserChrome />
      <Banner />
      <div className="flex min-h-0 flex-1">
        <Sidebar />
        <PatientWindow />
      </div>
      <Taskbar />
    </div>
  );
}
